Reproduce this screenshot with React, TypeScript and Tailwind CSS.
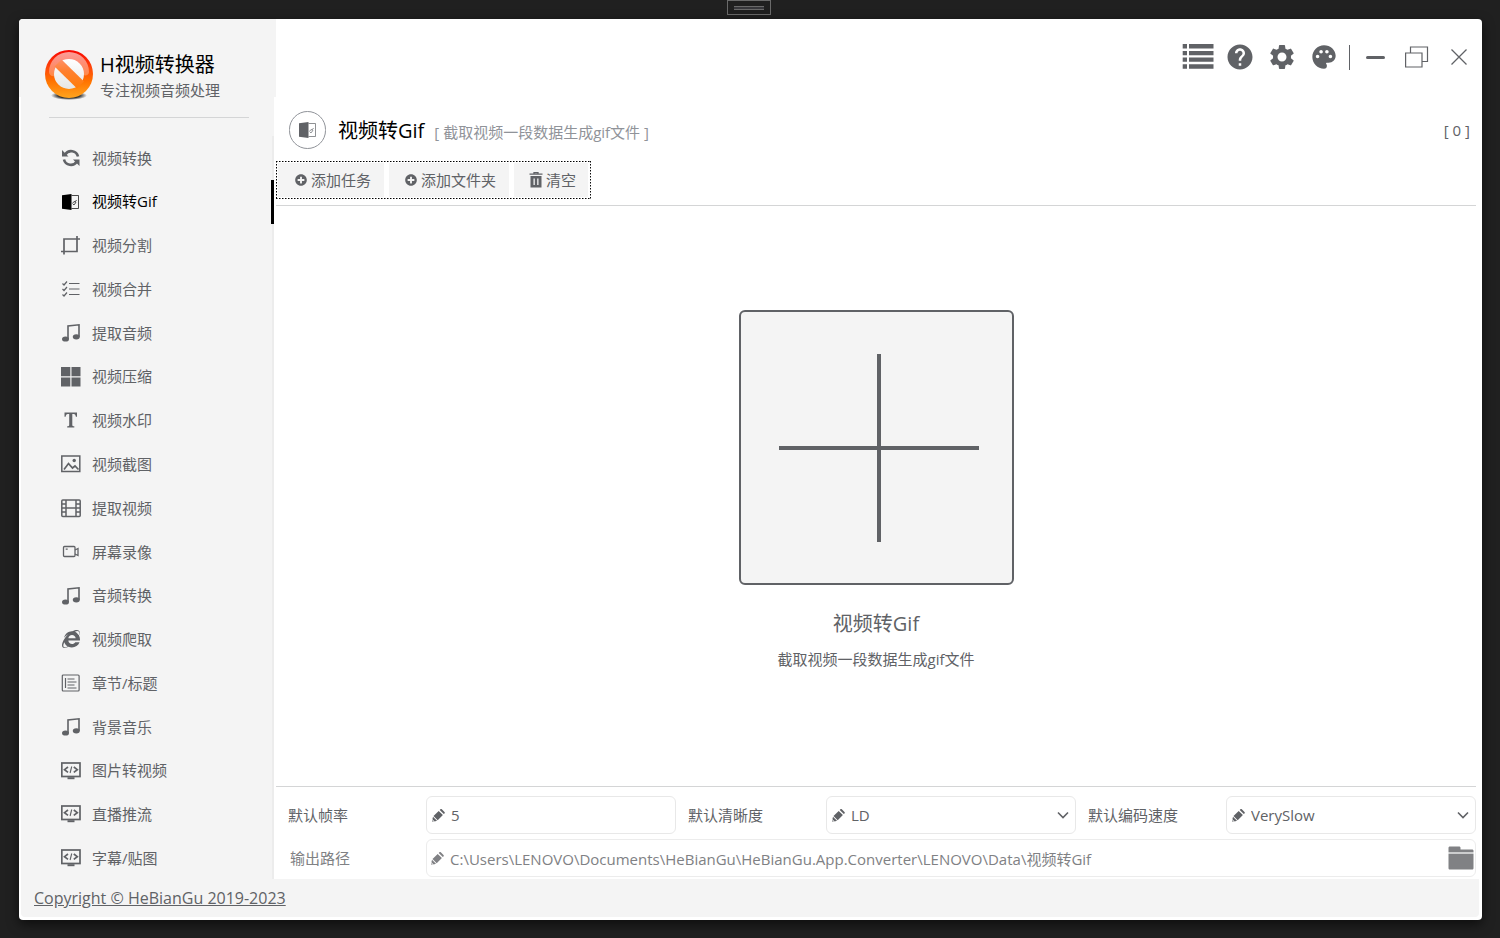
import type { ReactNode } from "react";
import { FaInternetExplorer, FaPlusCircle } from "react-icons/fa";
import { MdHelp, MdPalette, MdSettings } from "react-icons/md";

type IconProps = { className?: string };

function Logo() {
  return (
    <svg viewBox="0 0 50 50" className="h-[50px] w-[50px] shrink-0" aria-hidden="true">
      <defs>
        <linearGradient id="ring" x1="0" y1="0" x2="0" y2="1">
          <stop offset="0" stopColor="#f80400" />
          <stop offset="0.4" stopColor="#ff4d0a" />
          <stop offset="0.65" stopColor="#ff7300" />
          <stop offset="1" stopColor="#ffa51e" />
        </linearGradient>
        <linearGradient id="shine" x1="0" y1="0" x2="0" y2="1">
          <stop offset="0" stopColor="#fff" stopOpacity="0.6" />
          <stop offset="1" stopColor="#fff" stopOpacity="0.25" />
        </linearGradient>
        <linearGradient id="glass" x1="0" y1="0" x2="0" y2="1">
          <stop offset="0" stopColor="#fff" />
          <stop offset="1" stopColor="#e6e6e6" />
        </linearGradient>
        <linearGradient id="band" x1="0" y1="0" x2="0" y2="1">
          <stop offset="0" stopColor="#ff9068" />
          <stop offset="0.4" stopColor="#ff8030" />
          <stop offset="1" stopColor="#ff7d08" />
        </linearGradient>
        <radialGradient id="shade">
          <stop offset="0.6" stopColor="#333" />
          <stop offset="1" stopColor="#333" stopOpacity="0" />
        </radialGradient>
      </defs>
      <ellipse cx="24" cy="45.500" rx="18" ry="4.500" fill="url(#shade)" />
      <circle cx="24" cy="24" r="24" fill="url(#ring)" />
      <path d="M4 22a20 20 0 0 1 40 0c0 3-3 4-6 3-9-3-19-3-28 1-3 1-6-1-6-4z" fill="url(#shine)" />
      <circle cx="24" cy="24" r="15" fill="url(#glass)" />
      <path d="M9.500 16.500l7-7 22.500 22-7 7z" fill="url(#band)" />
    </svg>
  );
}

function RefreshIcon({ className }: IconProps) {
  return (
    <svg viewBox="0 0 20 20" className={className} aria-hidden="true">
      <path d="M4.200 6.500A7 7 0 0 1 17 8.500M15.800 13.500A7 7 0 0 1 3 11.500" fill="none" stroke="currentColor" strokeWidth="2.600" />
      <path d="M1 2v6.500h6.500zM18.500 18v-6.500H12z" fill="currentColor" />
    </svg>
  );
}

function GifIcon({ className }: IconProps) {
  return (
    <svg viewBox="0 0 20 20" className={className} aria-hidden="true">
      <path d="M1 3.300L10.500 2v16L1 16.700z" fill="currentColor" />
      <path d="M10.500 3.500h7v13h-7" fill="none" stroke="currentColor" strokeOpacity="0.700" strokeWidth="1" />
      <path d="M11.500 11.500l1.500-2 1 .5 1.500-2M12 12.500h1.500l1.500-2.500" fill="none" stroke="currentColor" strokeOpacity="0.700" strokeWidth="1" />
    </svg>
  );
}

function CropIcon({ className }: IconProps) {
  return (
    <svg viewBox="0 0 20 20" className={className} aria-hidden="true">
      <path d="M3 19.500V4H19M16 1v15.500H0" fill="none" stroke="currentColor" strokeWidth="1.700" />
    </svg>
  );
}

function ChecklistIcon({ className }: IconProps) {
  return (
    <svg viewBox="0 0 20 20" className={className} fill="none" stroke="currentColor" aria-hidden="true">
      <path d="M8 4.500h10.500M8 10h10.500M8 15.500h10.500" strokeWidth="1.200" />
      <path d="M1.500 4.500L3 6l3-3.500M1.500 10L3 11.500 6 8M1.500 15.500L3 17l3-3.500" strokeWidth="1.200" />
    </svg>
  );
}

function MusicIcon({ className }: IconProps) {
  return (
    <svg viewBox="0 0 20 20" className={className} aria-hidden="true">
      <path d="M7 16V3l11-1.200v12" fill="none" stroke="currentColor" strokeWidth="1.600" />
      <ellipse cx="4.500" cy="16" rx="3.500" ry="2.600" fill="currentColor" />
      <ellipse cx="15.300" cy="13.800" rx="3.500" ry="2.600" fill="currentColor" />
    </svg>
  );
}

function TilesIcon({ className }: IconProps) {
  return (
    <svg viewBox="0 0 20 20" className={className} fill="currentColor" aria-hidden="true">
      <path d="M0 0h9.300v9.300H0zM10.500 0H19.500v9.300h-9zM0 10.500h9.300V19.500H0zM10.500 10.500H19.500V19.500h-9z" />
    </svg>
  );
}

function TypeIcon({ className }: IconProps) {
  return (
    <svg viewBox="0 0 20 20" className={className} fill="currentColor" aria-hidden="true">
      <path d="M3.500 2.500h12.500v4.300h-1.100c-.3-1.900-.8-2.900-2.200-2.900h-1.400V15c0 1 .5 1.200 2 1.300V17.500H6.200v-1.200c1.500-.1 2-.3 2-1.300V3.900H6.800c-1.400 0-1.900 1-2.200 2.900H3.500z" />
    </svg>
  );
}

function PictureIcon({ className }: IconProps) {
  return (
    <svg viewBox="0 0 20 20" className={className} aria-hidden="true">
      <rect x="0.800" y="2" width="18" height="15.500" fill="none" stroke="currentColor" strokeWidth="1.500" />
      <path d="M3 15.500l4.500-6 4 4.500 2.500-2 3.500 3.500" fill="none" stroke="currentColor" strokeWidth="1.700" />
      <circle cx="13.200" cy="6.500" r="1.700" fill="currentColor" />
    </svg>
  );
}

function FilmIcon({ className }: IconProps) {
  return (
    <svg viewBox="0 0 20 20" className={className} fill="none" stroke="currentColor" strokeWidth="1.500" aria-hidden="true">
      <rect x="0.800" y="2" width="18.400" height="16.500" rx="1" />
      <path d="M5 2v16.500M15 2v16.500M5 10h10M1 6h4M1 10h4M1 14h4M15 6h4M15 10h4M15 14h4" />
    </svg>
  );
}

function CameraIcon({ className }: IconProps) {
  return (
    <svg viewBox="0 0 20 20" className={className} fill="none" stroke="currentColor" strokeWidth="1.300" aria-hidden="true">
      <rect x="2.500" y="4.500" width="11.500" height="10" rx="1" />
      <path d="M14 8l3-1.500v7l-3-1.500M4.700 7.200h2" />
    </svg>
  );
}

function ArticleIcon({ className }: IconProps) {
  return (
    <svg viewBox="0 0 20 20" className={className} fill="none" stroke="currentColor" strokeWidth="1.200" aria-hidden="true">
      <rect x="1.300" y="2" width="16.800" height="16" rx="1" />
      <path d="M4.500 5v10M6.500 6h7M6.500 9h9M6.500 12h7M6.500 15h9" />
    </svg>
  );
}

function CodeScreenIcon({ className }: IconProps) {
  return (
    <svg viewBox="0 0 20 20" className={className} fill="none" stroke="currentColor" aria-hidden="true">
      <rect x="0.800" y="2" width="18.200" height="13.500" strokeWidth="1.700" />
      <path d="M7 6L3.500 8.700 7 11.400M12.800 6l3.500 2.700-3.500 2.700" strokeWidth="1.700" />
      <path d="M10.700 5.500l-1.600 6.500" strokeWidth="1.100" />
      <path d="M6.500 17.200h7" strokeWidth="2" />
    </svg>
  );
}

function TrashIcon({ className }: IconProps) {
  return (
    <svg viewBox="0 0 14 16" className={className} aria-hidden="true">
      <path d="M5 1.500V.7h4v.8M.5 2.200h13" fill="none" stroke="currentColor" strokeWidth="1.300" />
      <path d="M1.500 4h11v11.500h-11zM4.500 6.500v6.500h1.300V6.500zM8.200 6.500v6.500h1.300V6.500z" fill="currentColor" fillRule="evenodd" />
    </svg>
  );
}

function PencilIcon({ className }: IconProps) {
  return (
    <svg viewBox="0 0 13 13" className={className} fill="currentColor" aria-hidden="true">
      <path d="M6.700 1.900l4.200 4.200-5.200 5.200-4.200-4.200zM7.700 1l.7-.7c.4-.4 1-.4 1.400 0l2.700 2.700c.4.400.4 1 0 1.400l-.7.700zM1 7.800L5 11.800 2.600 12.400.4 10.200zM.3 10.900l1.500 1.500-1.500.3z" />
    </svg>
  );
}

function ListIcon({ className }: IconProps) {
  return (
    <svg viewBox="0 0 32 26" className={className} fill="currentColor" aria-hidden="true">
      <path d="M.7 0h4.300v4.500H.7zM7 0h24.500v4.500H7zM.7 7h4.300v4.300H.7zM7 7h24.500v4.300H7zM.7 13.500h4.300v4.300H.7zM7 13.500h24.500v4.300H7zM.7 20.300h4.300v4.500H.7zM7 20.300h24.500v4.500H7z" />
    </svg>
  );
}

function RestoreIcon({ className }: IconProps) {
  return (
    <svg viewBox="0 0 24 22" className={className} fill="none" stroke="currentColor" strokeWidth="1.200" aria-hidden="true">
      <path d="M.6 7h16.400v14H.6zM5.500 7V1h17v14.500H17" />
    </svg>
  );
}

function CloseIcon({ className }: IconProps) {
  return (
    <svg viewBox="0 0 16 16" className={className} fill="none" stroke="currentColor" strokeWidth="1.300" aria-hidden="true">
      <path d="M.5.500l15 15M15.500.500l-15 15" />
    </svg>
  );
}

function FolderIcon({ className }: IconProps) {
  return (
    <svg viewBox="0 0 26 24" className={className} fill="currentColor" aria-hidden="true">
      <path d="M.5 6V2C.5 1 1 .5 2 .5h9c1 0 1.500.500 1.500 1.500v1.500H24c1 0 1.500.5 1.500 1.500v1zM.5 8h25v14c0 1-.5 1.500-1.500 1.500H2c-1 0-1.500-.5-1.500-1.500z" />
      <path d="M.5 6h25v2H.5z" opacity="0.400" />
    </svg>
  );
}

const navItems: { label: string; Icon: (p: IconProps) => ReactNode }[] = [
  { label: "视频转换", Icon: RefreshIcon },
  { label: "视频转Gif", Icon: GifIcon },
  { label: "视频分割", Icon: CropIcon },
  { label: "视频合并", Icon: ChecklistIcon },
  { label: "提取音频", Icon: MusicIcon },
  { label: "视频压缩", Icon: TilesIcon },
  { label: "视频水印", Icon: TypeIcon },
  { label: "视频截图", Icon: PictureIcon },
  { label: "提取视频", Icon: FilmIcon },
  { label: "屏幕录像", Icon: CameraIcon },
  { label: "音频转换", Icon: MusicIcon },
  { label: "视频爬取", Icon: FaInternetExplorer },
  { label: "章节/标题", Icon: ArticleIcon },
  { label: "背景音乐", Icon: MusicIcon },
  { label: "图片转视频", Icon: CodeScreenIcon },
  { label: "直播推流", Icon: CodeScreenIcon },
  { label: "字幕/贴图", Icon: CodeScreenIcon },
];

function Sidebar() {
  return (
    <aside className="flex w-[257px] shrink-0 flex-col">
      <div className="relative flex h-[78px] items-start gap-[5px] rounded-tl bg-[#f4f4f4] pt-[31px] pl-[26px]">
        <Logo />
        <div className="whitespace-nowrap">
          <h1 className="text-[20px] leading-[30px] text-black">H视频转换器</h1>
          <p className="text-[15px] leading-5">专注视频音频处理</p>
        </div>
      </div>
      <div className="mx-0.5 flex flex-1 flex-col bg-[#f4f4f4]">
        <hr className="mt-5 mr-[25px] mb-[18px] ml-7 border-[#d4d5d6]" />
        <nav className="-mb-px flex flex-1 flex-col border-r-2 border-[#ececec]">
          {navItems.map(({ label, Icon }, i) => (
            <a
              key={label}
              href="#"
              aria-current={i === 1 ? "page" : undefined}
              className={
                i === 1
                  ? "-mr-0.5 flex min-h-9 flex-1 items-center gap-[11px] border-r-[3px] border-black pl-10 text-[15px] text-black"
                  : "flex min-h-9 flex-1 items-center gap-[11px] pl-10 text-[15px]"
              }
            >
              <span className="flex h-5 w-5 shrink-0 items-center justify-center">
                <Icon className={Icon === FaInternetExplorer ? "h-[18px] w-[18px]" : "h-5 w-5"} />
              </span>
              <span>{label}</span>
            </a>
          ))}
        </nav>
      </div>
    </aside>
  );
}

function TitleButton({ label, children }: { label: string; children: ReactNode }) {
  return (
    <button type="button" aria-label={label} className="flex h-10 w-[42px] items-center justify-center">
      {children}
    </button>
  );
}

function WindowBar() {
  return (
    <div className="flex h-[76px] items-center justify-end pr-0.5 text-[#606266]">
      <TitleButton label="任务列表">
        <ListIcon className="h-[26px] w-8" />
      </TitleButton>
      <TitleButton label="帮助">
        <MdHelp className="h-[30px] w-[30px] shrink-0" />
      </TitleButton>
      <TitleButton label="设置">
        <MdSettings className="h-[30px] w-[30px] shrink-0" />
      </TitleButton>
      <TitleButton label="主题">
        <MdPalette className="h-7 w-7 shrink-0" />
      </TitleButton>
      <span className="mx-1 h-[25px] w-px bg-[#606266]" />
      <TitleButton label="最小化">
        <span className="h-[3px] w-[19px] rounded-full bg-[#606266]" />
      </TitleButton>
      <TitleButton label="还原">
        <RestoreIcon className="h-[22px] w-6" />
      </TitleButton>
      <TitleButton label="关闭">
        <CloseIcon className="h-4 w-4" />
      </TitleButton>
    </div>
  );
}

function Toolbar() {
  return (
    <div className="relative flex h-[38px] gap-[5px] self-start p-0.5 pr-[3px] text-[15px]">
      <svg className="pointer-events-none absolute inset-0 h-full w-full" aria-hidden="true">
        <g stroke="#000" strokeDasharray="1.500 1.500">
          <line x1="0" y1="0.500" x2="100%" y2="0.500" />
          <line x1="0" y1="37.500" x2="100%" y2="37.500" />
          <line x1="0.500" y1="0" x2="0.500" y2="100%" />
          <line x1="100%" y1="0" x2="100%" y2="100%" strokeWidth="2" />
        </g>
      </svg>
      <button type="button" className="flex items-center gap-1 bg-[#f4f4f4] pr-[13px] pl-[17px]">
        <FaPlusCircle className="h-3 w-3" />
        添加任务
      </button>
      <button type="button" className="flex items-center gap-1 bg-[#f4f4f4] pr-[13px] pl-4">
        <FaPlusCircle className="h-3 w-3" />
        添加文件夹
      </button>
      <button type="button" className="flex items-center gap-[3px] bg-[#f4f4f4] pr-3 pl-[15px]">
        <TrashIcon className="h-4 w-3.5" />
        清空
      </button>
    </div>
  );
}

function DropArea() {
  return (
    <section className="flex flex-1 flex-col items-center justify-center pb-3">
      <button
        type="button"
        aria-label="添加视频"
        className="flex h-[275px] w-[275px] items-center justify-center rounded-md border-2 border-[#606266] bg-[#f4f4f4]"
      >
        <svg viewBox="0 0 200 188" className="mt-0.5 ml-1.5 h-[188px] w-[200px]" aria-hidden="true">
          <path d="M0 94h200M100 0v188" stroke="#606266" strokeWidth="4" />
        </svg>
      </button>
      <h3 className="mt-6 text-[20px] leading-[30px]">视频转Gif</h3>
      <p className="mt-2 text-[15px] leading-6">截取视频一段数据生成gif文件</p>
    </section>
  );
}

function SelectField({ id, label, value, options }: { id: string; label: string; value: string; options: string[] }) {
  return (
    <div className="flex items-center">
      <label htmlFor={id} className="w-[150px] shrink-0 pl-3">
        {label}
      </label>
      <div className="relative flex h-[38px] min-w-0 flex-1 items-center rounded-md border border-[#e8e8e8]">
        <PencilIcon className="absolute left-[5px] h-[13px] w-[13px]" />
        <select id={id} defaultValue={value} className="h-full w-full appearance-none bg-transparent pl-6">
          {options.map((o) => (
            <option key={o}>{o}</option>
          ))}
        </select>
        <svg viewBox="0 0 12 8" className="pointer-events-none absolute right-1.5 h-2 w-3" aria-hidden="true">
          <path d="M1 1.500l5 5 5-5" fill="none" stroke="currentColor" strokeWidth="1.600" />
        </svg>
      </div>
    </div>
  );
}

function Settings() {
  return (
    <form className="flex flex-col gap-[5px] border-t border-[#d4d5d6] pt-[9px] pb-0.5 text-[15px]">
      <div className="grid grid-cols-3">
        <div className="flex items-center">
          <label htmlFor="fps" className="w-[150px] shrink-0 pl-3">
            默认帧率
          </label>
          <div className="relative flex h-[38px] min-w-0 flex-1 items-center rounded-md border border-[#e8e8e8]">
            <PencilIcon className="absolute left-[5px] h-[13px] w-[13px]" />
            <input id="fps" defaultValue="5" className="h-full w-full bg-transparent pl-6" />
          </div>
        </div>
        <SelectField id="quality" label="默认清晰度" value="LD" options={["LD", "SD", "HD"]} />
        <SelectField id="speed" label="默认编码速度" value="VerySlow" options={["VerySlow", "Slow", "Medium", "Fast"]} />
      </div>
      <div className="flex items-center text-[#808184]">
        <label htmlFor="path" className="w-[150px] shrink-0 pl-3.5">
          输出路径
        </label>
        <div className="relative flex h-[38px] min-w-0 flex-1 items-center rounded-md border border-[#ececec] pr-px">
          <PencilIcon className="absolute left-1 h-[13px] w-[13px]" />
          <input
            id="path"
            defaultValue="C:\Users\LENOVO\Documents\HeBianGu\HeBianGu.App.Converter\LENOVO\Data\视频转Gif"
            className="h-full min-w-0 flex-1 bg-transparent pl-[23px]"
          />
          <button type="button" aria-label="选择文件夹">
            <FolderIcon className="h-6 w-[26px]" />
          </button>
        </div>
      </div>
    </form>
  );
}

export default function App() {
  return (
    <div className="flex min-h-screen flex-col bg-[#202020] pr-[18px] pb-[18px] pl-[19px] font-['Open_Sans','Noto_Sans_CJK_SC',sans-serif] text-[#606266]">
      <div className="flex h-[19px] items-start justify-center pr-1">
        <div className="flex h-[15px] w-11 items-center justify-center border border-[#6a6a6a]">
          <span className="h-1 w-[30px] border-y border-[#6a6a6a] bg-[#38383c]" />
        </div>
      </div>
      <div className="flex flex-1 flex-col rounded bg-white shadow-[0_4px_12px_rgba(0,0,0,0.6)]">
        <div className="flex flex-1">
          <Sidebar />
          <main className="flex min-w-0 flex-1 flex-col">
            <WindowBar />
            <div className="mr-1.5 flex flex-1 flex-col">
              <header className="flex h-[66px] items-center pt-1 pr-1.5 pl-[13px]">
                <span className="flex h-[38px] w-[37px] items-center justify-center rounded-full border border-[#909399]">
                  <GifIcon className="h-5 w-5" />
                </span>
                <div className="ml-3 flex flex-1 items-baseline gap-2.5 pt-0.5">
                  <h2 className="text-[20px] leading-7 text-black">视频转Gif</h2>
                  <p className="text-[15px] text-[#909399]">[ 截取视频一段数据生成gif文件 ]</p>
                </div>
                <span className="text-[15px]">[ 0 ]</span>
              </header>
              <Toolbar />
              <hr className="mt-1.5 border-[#d4d5d6]" />
              <DropArea />
              <Settings />
            </div>
          </main>
        </div>
        <footer className="mr-[3px] mb-[3px] ml-0.5 flex h-[38px] items-center rounded-b bg-[#f4f4f4] pl-[13px] text-base">
          <a href="#" className="underline">
            Copyright © HeBianGu 2019-2023
          </a>
        </footer>
      </div>
    </div>
  );
}
